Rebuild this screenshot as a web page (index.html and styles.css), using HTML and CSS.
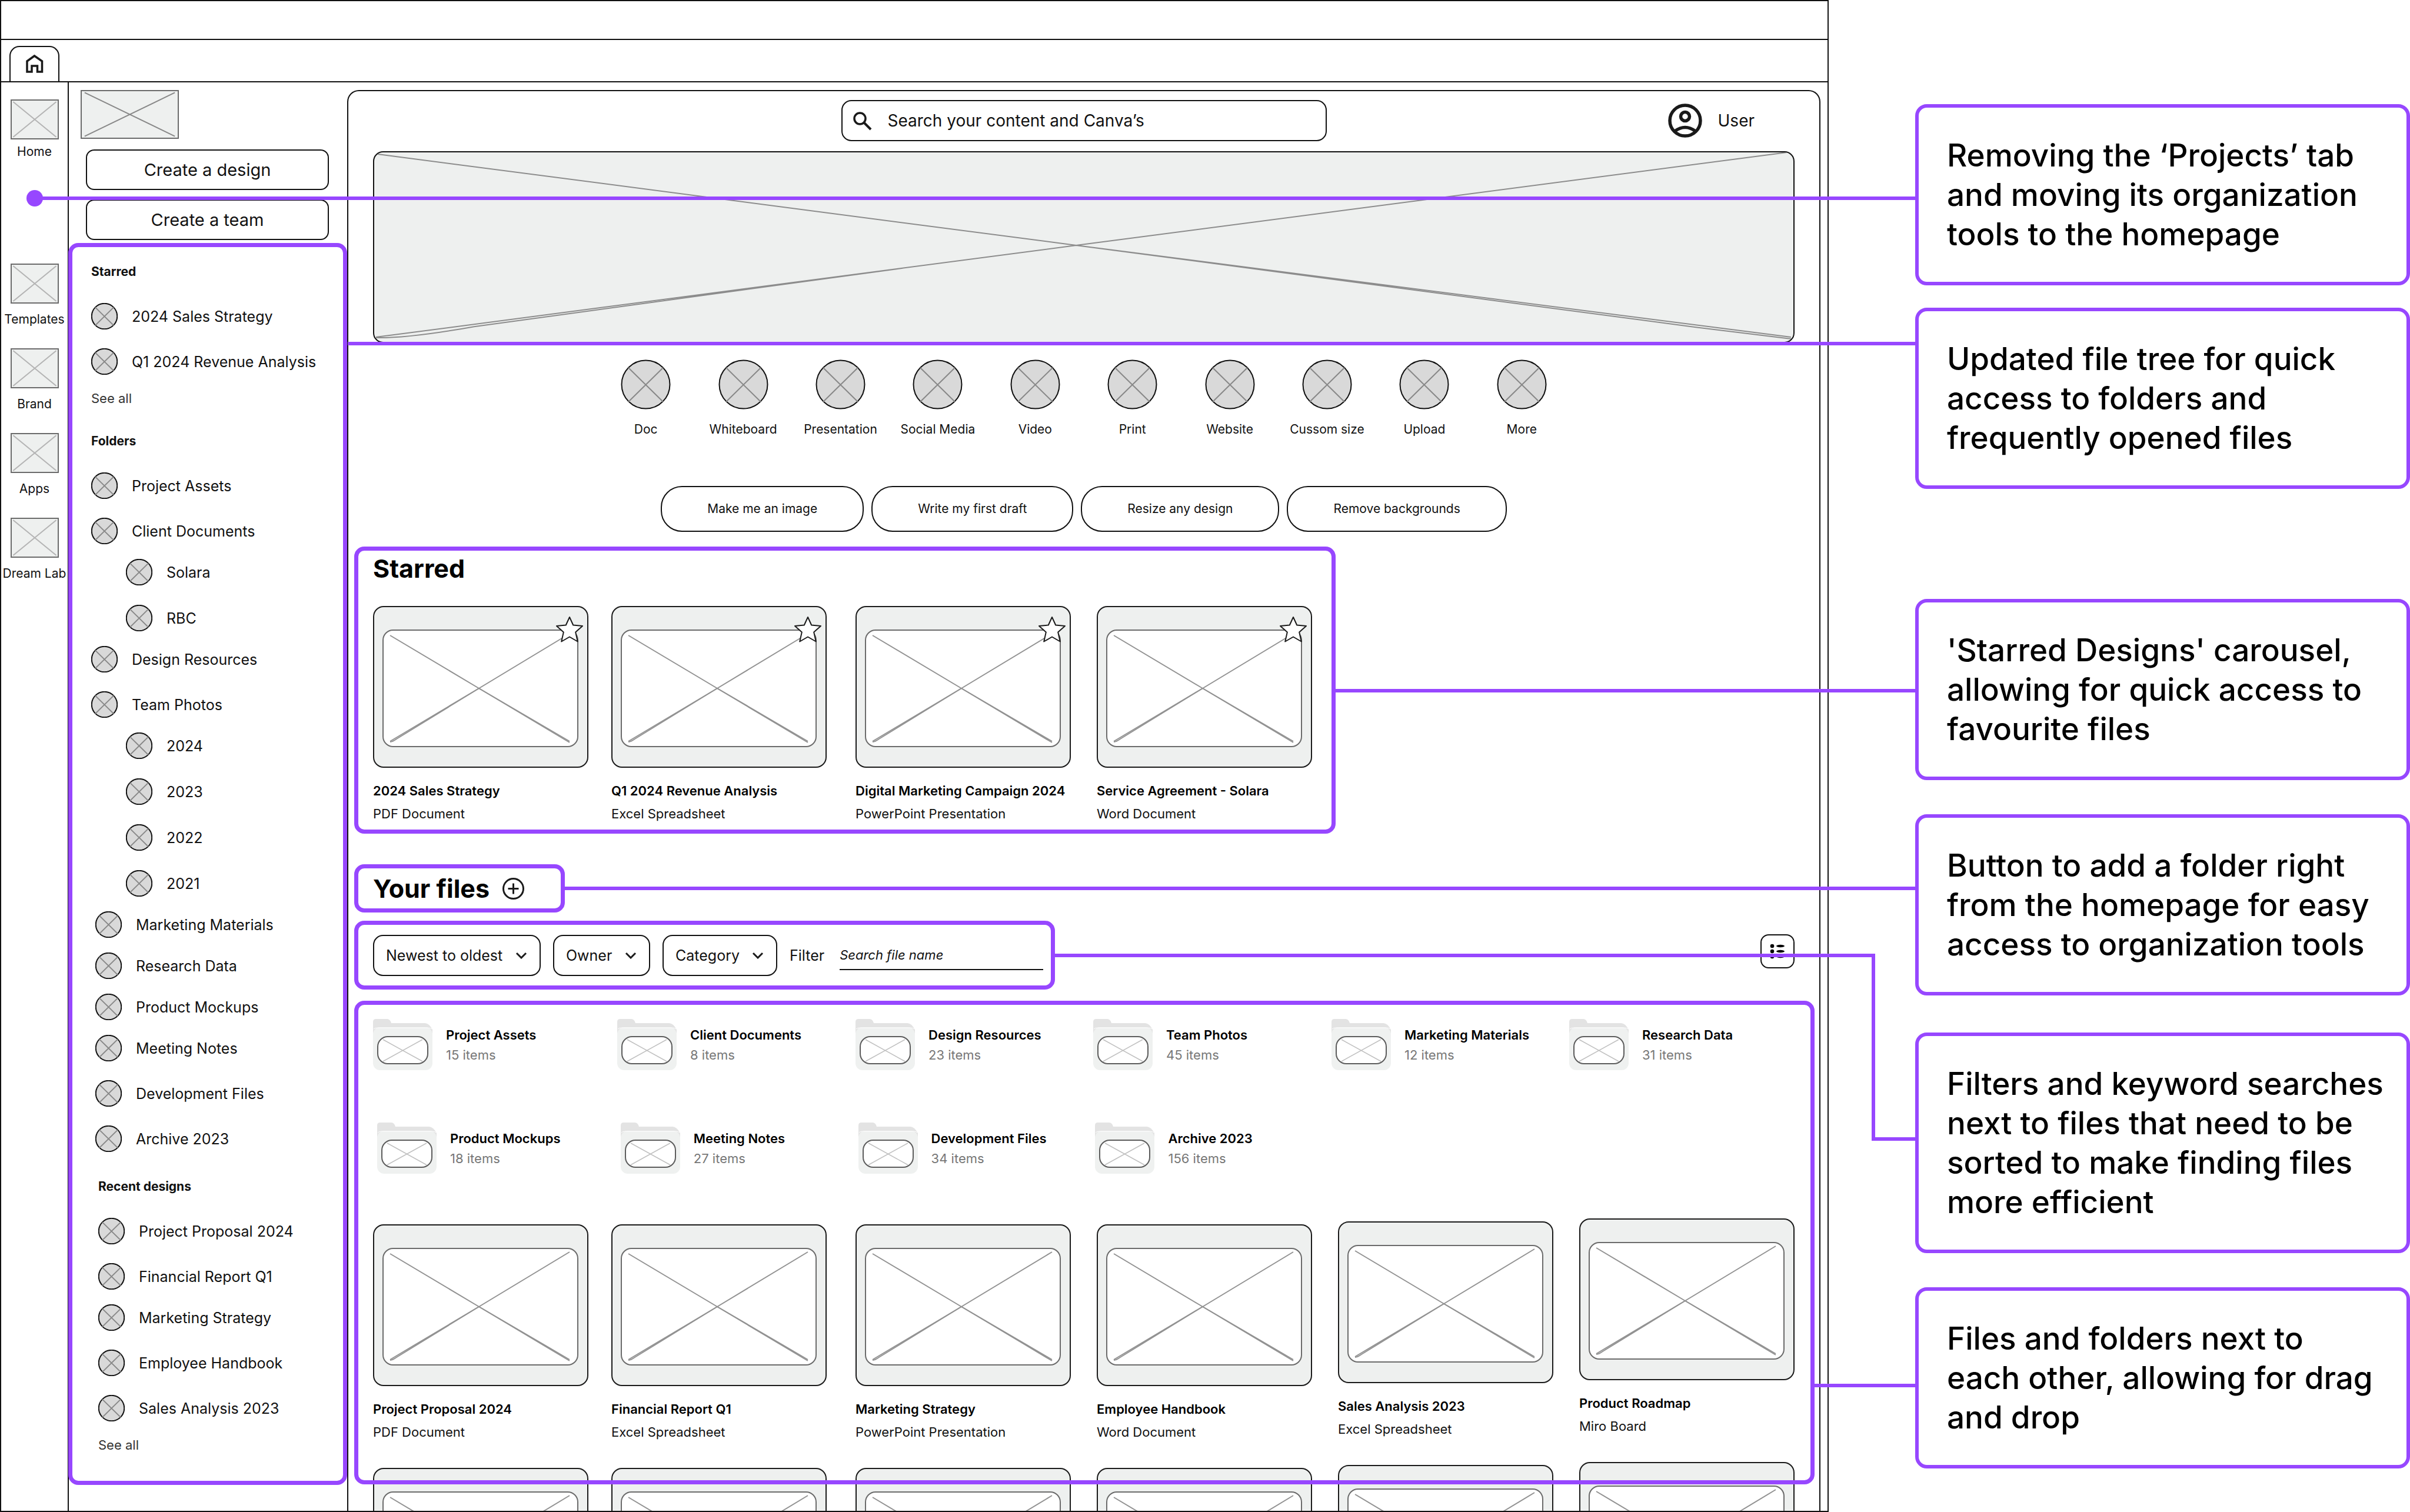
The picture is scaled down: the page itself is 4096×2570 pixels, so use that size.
FILE: index.html
```html
<!DOCTYPE html>
<html lang="en">
<head>
    <meta charset="UTF-8">
    <meta name="viewport" content="width=device-width, initial-scale=1.0">
    <title>Homepage wireframe</title>
    <link rel="stylesheet" href="styles.css">
</head>
<body>

<!-- Shared shapes -->
<svg class="shapes" aria-hidden="true">
    <symbol id="circle" viewBox="0 0 85 85">
        <circle class="disc" cx="42.5" cy="42.5" r="41"/>
        <path class="cross" d="M13 14L72 72M72 14L13 72"/>
    </symbol>
    <symbol id="box" viewBox="0 0 100 100" preserveAspectRatio="none">
        <path class="cross" d="M3 3L97 97M97 3L3 97"/>
    </symbol>
    <symbol id="thumb" viewBox="0 0 366 275">
        <rect x="1" y="1" width="364" height="273" rx="17" fill="#eef0ef" stroke="#1a1a1a" stroke-width="2"/>
        <rect x="17" y="41" width="331" height="198" rx="17" fill="#fff" stroke="#6b6b6b" stroke-width="2"/>
        <path d="M29 50L180 140L334 230M334 47L180 140L29 230" fill="none" stroke="#929292" stroke-width="2"/>
        <path d="M180 140L334 232M180 140L40 226Q33 231 29 231" fill="none" stroke="#929292" stroke-width="2"/>
    </symbol>
    <symbol id="star" viewBox="0 0 48 46">
        <path d="M24 2L30.2 15.5L46 17L34.2 27.6L37.8 43.5L24 35.5L10.2 43.5L13.8 27.6L2 17L17.8 15.5Z" fill="#fff" stroke="#1a1a1a" stroke-width="2" stroke-linejoin="round"/>
    </symbol>
    <symbol id="folder" viewBox="0 0 101 87">
        <path d="M0 20V5Q0 0 5 0H24Q29 0 31 7H88Q95 7 101 18V24H0Z" fill="#e3e3e3"/>
        <rect x="0" y="14" width="101" height="73" rx="12" fill="#eff1f0"/>
        <path d="M1 17Q3 15 8 15H93Q98 15 100 17" fill="none" stroke="#fff" stroke-width="1"/>
        <rect x="8" y="30" width="85" height="46" rx="17" fill="#fff" stroke="#5c5c5c" stroke-width="2"/>
        <path d="M17 35L84 72M84 35L17 72" stroke="#c0c0c0" stroke-width="1.5"/>
    </symbol>
    <symbol id="chevron" viewBox="0 0 20 12">
        <path d="M2 2L10 10L18 2" fill="none" stroke="#1a1a1a" stroke-width="3"/>
    </symbol>
</svg>

<main class="frame">
    <div class="titlebar"></div>
    <div class="tabbar">
        <a class="tab" href="#" aria-label="Home tab">
            <svg width="30" height="32" viewBox="0 0 30 32"><path d="M2 12L14.500 3L27.500 12V30H19.500V20H10V30H2Z" fill="none" stroke="#1a1a1a" stroke-width="3.500"/></svg>
        </a>
    </div>

    <div class="workspace">
        <nav class="rail">
            <a class="rail-item rail-home" href="#"><svg class="box"><use href="#box"/></svg>Home</a>
            <a class="rail-item" href="#"><svg class="box"><use href="#box"/></svg>Templates</a>
            <a class="rail-item" href="#"><svg class="box"><use href="#box"/></svg>Brand</a>
            <a class="rail-item" href="#"><svg class="box"><use href="#box"/></svg>Apps</a>
            <a class="rail-item" href="#"><svg class="box"><use href="#box"/></svg>Dream Lab</a>
        </nav>

        <aside class="sidebar">
            <div class="sidebar-top">
                <svg class="box logo"><use href="#box"/></svg>
                <button class="create">Create a design</button>
                <button class="create">Create a team</button>
            </div>

            <div class="tree outline">
                <section>
                    <h3>Starred</h3>
                    <ul>
                        <li><svg><use href="#circle"/></svg>2024 Sales Strategy</li>
                        <li class="apart"><svg><use href="#circle"/></svg>Q1 2024 Revenue Analysis</li>
                    </ul>
                    <a class="see-all" href="#">See all</a>
                </section>
                <section>
                    <h3>Folders</h3>
                    <ul>
                        <li><svg><use href="#circle"/></svg>Project Assets</li>
                        <li class="apart"><svg><use href="#circle"/></svg>Client Documents</li>
                    </ul>
                    <ul class="sub">
                        <li><svg><use href="#circle"/></svg>Solara</li>
                        <li><svg><use href="#circle"/></svg>RBC</li>
                    </ul>
                    <ul>
                        <li><svg><use href="#circle"/></svg>Design Resources</li>
                        <li class="apart"><svg><use href="#circle"/></svg>Team Photos</li>
                    </ul>
                    <ul class="sub">
                        <li><svg><use href="#circle"/></svg>2024</li>
                        <li><svg><use href="#circle"/></svg>2023</li>
                        <li><svg><use href="#circle"/></svg>2022</li>
                        <li><svg><use href="#circle"/></svg>2021</li>
                    </ul>
                    <ul class="shifted">
                        <li><svg><use href="#circle"/></svg>Marketing Materials</li>
                        <li><svg><use href="#circle"/></svg>Research Data</li>
                        <li><svg><use href="#circle"/></svg>Product Mockups</li>
                        <li><svg><use href="#circle"/></svg>Meeting Notes</li>
                        <li class="apart"><svg><use href="#circle"/></svg>Development Files</li>
                        <li class="apart"><svg><use href="#circle"/></svg>Archive 2023</li>
                    </ul>
                </section>
                <section class="recent">
                    <h3>Recent designs</h3>
                    <ul>
                        <li><svg><use href="#circle"/></svg>Project Proposal 2024</li>
                        <li class="apart"><svg><use href="#circle"/></svg>Financial Report Q1</li>
                        <li><svg><use href="#circle"/></svg>Marketing Strategy</li>
                        <li class="apart"><svg><use href="#circle"/></svg>Employee Handbook</li>
                        <li class="apart"><svg><use href="#circle"/></svg>Sales Analysis 2023</li>
                    </ul>
                    <a class="see-all" href="#">See all</a>
                </section>
            </div>
        </aside>

        <div class="content">
            <header class="topbar">
                <label class="search">
                    <svg width="33" height="33" viewBox="0 0 33 33"><path d="M20 20L31 31" stroke="#1a1a1a" stroke-width="4"/><circle cx="12.500" cy="12.500" r="9.500" fill="none" stroke="#1a1a1a" stroke-width="3.500"/></svg>
                    <input type="text" aria-label="Search" placeholder="Search your content and Canva’s">
                </label>
                <a class="user" href="#">
                    <svg width="58" height="58" viewBox="0 0 58 58" fill="none" stroke="#1a1a1a" stroke-width="5.500">
                        <circle cx="29" cy="29" r="26"/>
                        <circle cx="29" cy="22" r="7.500"/>
                        <path d="M11.500 47Q29 34 46.500 47"/>
                    </svg>
                    User
                </a>
            </header>

            <!-- Banner placeholder -->
            <svg class="banner" viewBox="0 0 2416 324" preserveAspectRatio="none">
                <path d="M6 3L1195 159L2412 316M1195 159L2250 299Q2350 311 2412 319M2405 0L1195 159L3 316M900 198L170 298Q60 318 3 317"/>
            </svg>

            <div class="shortcuts">
                <a href="#"><svg><use href="#circle"/></svg>Doc</a>
                <a href="#"><svg><use href="#circle"/></svg>Whiteboard</a>
                <a href="#"><svg><use href="#circle"/></svg>Presentation</a>
                <a href="#"><svg><use href="#circle"/></svg>Social Media</a>
                <a href="#"><svg><use href="#circle"/></svg>Video</a>
                <a href="#"><svg><use href="#circle"/></svg>Print</a>
                <a href="#"><svg><use href="#circle"/></svg>Website</a>
                <a href="#"><svg><use href="#circle"/></svg>Cussom size</a>
                <a href="#"><svg><use href="#circle"/></svg>Upload</a>
                <a href="#"><svg><use href="#circle"/></svg>More</a>
            </div>

            <div class="prompts">
                <button>Make me an image</button>
                <button>Write my first draft</button>
                <button>Resize any design</button>
                <button>Remove backgrounds</button>
            </div>

            <section class="starred outline">
                <h2>Starred</h2>
                <div class="starred-cards">
                    <article class="card">
                        <svg class="thumb"><use href="#thumb"/></svg>
                        <button class="star" aria-label="Unstar"><svg><use href="#star"/></svg></button>
                        <h4>2024 Sales Strategy</h4>
                        <p>PDF Document</p>
                    </article>
                    <article class="card">
                        <svg class="thumb"><use href="#thumb"/></svg>
                        <button class="star" aria-label="Unstar"><svg><use href="#star"/></svg></button>
                        <h4>Q1 2024 Revenue Analysis</h4>
                        <p>Excel Spreadsheet</p>
                    </article>
                    <article class="card">
                        <svg class="thumb"><use href="#thumb"/></svg>
                        <button class="star" aria-label="Unstar"><svg><use href="#star"/></svg></button>
                        <h4>Digital Marketing Campaign 2024</h4>
                        <p>PowerPoint Presentation</p>
                    </article>
                    <article class="card">
                        <svg class="thumb"><use href="#thumb"/></svg>
                        <button class="star" aria-label="Unstar"><svg><use href="#star"/></svg></button>
                        <h4>Service Agreement - Solara</h4>
                        <p>Word Document</p>
                    </article>
                </div>
            </section>

            <div class="your-files outline">
                <h2>Your files</h2>
                <button class="add" aria-label="Add folder">
                    <svg width="37" height="37" viewBox="0 0 37 37" fill="none" stroke="#1a1a1a" stroke-width="3"><circle cx="18.500" cy="18.500" r="17"/><path d="M18.500 9.500V27.500M9.500 18.500H27.500"/></svg>
                </button>
            </div>

            <div class="toolbar">
                <form class="filters outline">
                    <span class="select">
                        <select aria-label="Sort"><option>Newest to oldest</option></select>
                        <svg><use href="#chevron"/></svg>
                    </span>
                    <span class="select">
                        <select aria-label="Owner"><option>Owner</option></select>
                        <svg><use href="#chevron"/></svg>
                    </span>
                    <span class="select">
                        <select aria-label="Category"><option>Category</option></select>
                        <svg><use href="#chevron"/></svg>
                    </span>
                    <label for="filter">Filter</label>
                    <input type="text" id="filter" placeholder="Search file name">
                </form>
                <button class="view" aria-label="List view">
                    <svg width="26" height="26" viewBox="0 0 26 26">
                        <circle cx="4" cy="4" r="3.300"/><circle cx="4" cy="13" r="3.300"/><circle cx="4" cy="22" r="3.300"/>
                        <ellipse cx="18" cy="4" rx="7" ry="2.200"/><ellipse cx="18" cy="13" rx="7" ry="2.200"/><ellipse cx="18" cy="22" rx="7" ry="2.200"/>
                    </svg>
                </button>
            </div>

            <section class="files outline">
                <div class="folders">
                    <a href="#"><svg><use href="#folder"/></svg><span><b>Project Assets</b>15 items</span></a>
                    <a href="#"><svg><use href="#folder"/></svg><span><b>Client Documents</b>8 items</span></a>
                    <a href="#"><svg><use href="#folder"/></svg><span><b>Design Resources</b>23 items</span></a>
                    <a href="#"><svg><use href="#folder"/></svg><span><b>Team Photos</b>45 items</span></a>
                    <a href="#"><svg><use href="#folder"/></svg><span><b>Marketing Materials</b>12 items</span></a>
                    <a href="#"><svg><use href="#folder"/></svg><span><b>Research Data</b>31 items</span></a>
                </div>
                <div class="folders folders-second">
                    <a href="#"><svg><use href="#folder"/></svg><span><b>Product Mockups</b>18 items</span></a>
                    <a href="#"><svg><use href="#folder"/></svg><span><b>Meeting Notes</b>27 items</span></a>
                    <a href="#"><svg><use href="#folder"/></svg><span><b>Development Files</b>34 items</span></a>
                    <a href="#"><svg><use href="#folder"/></svg><span><b>Archive 2023</b>156 items</span></a>
                </div>
                <div class="file-cards">
                    <article class="card">
                        <svg class="thumb"><use href="#thumb"/></svg>
                        <h4>Project Proposal 2024</h4>
                        <p>PDF Document</p>
                    </article>
                    <article class="card">
                        <svg class="thumb"><use href="#thumb"/></svg>
                        <h4>Financial Report Q1</h4>
                        <p>Excel Spreadsheet</p>
                    </article>
                    <article class="card">
                        <svg class="thumb"><use href="#thumb"/></svg>
                        <h4>Marketing Strategy</h4>
                        <p>PowerPoint Presentation</p>
                    </article>
                    <article class="card">
                        <svg class="thumb"><use href="#thumb"/></svg>
                        <h4>Employee Handbook</h4>
                        <p>Word Document</p>
                    </article>
                    <article class="card">
                        <svg class="thumb"><use href="#thumb"/></svg>
                        <h4>Sales Analysis 2023</h4>
                        <p>Excel Spreadsheet</p>
                    </article>
                    <article class="card">
                        <svg class="thumb"><use href="#thumb"/></svg>
                        <h4>Product Roadmap</h4>
                        <p>Miro Board</p>
                    </article>
                </div>
            </section>

            <!-- Next row, cut off by the bottom of the frame -->
            <div class="file-cards next-row">
                <article class="card"><svg class="thumb"><use href="#thumb"/></svg></article>
                <article class="card"><svg class="thumb"><use href="#thumb"/></svg></article>
                <article class="card"><svg class="thumb"><use href="#thumb"/></svg></article>
                <article class="card"><svg class="thumb"><use href="#thumb"/></svg></article>
                <article class="card"><svg class="thumb"><use href="#thumb"/></svg></article>
                <article class="card"><svg class="thumb"><use href="#thumb"/></svg></article>
            </div>
        </div>
    </div>
</main>

<!-- Notes, each with a line back to the part it describes -->
<div class="notes">
    <p class="note note-projects">Removing the ‘Projects’ tab<br>and moving its organization<br>tools to the homepage</p>
    <p class="note note-tree">Updated file tree for quick<br>access to folders and<br>frequently opened files</p>
    <p class="note note-starred">'Starred Designs' carousel,<br>allowing for quick access to<br>favourite files</p>
    <p class="note note-add">Button to add a folder right<br>from the homepage for easy<br>access to organization tools</p>
    <p class="note note-filters">Filters and keyword searches<br>next to files that need to be<br>sorted to make finding files<br>more efficient</p>
    <p class="note note-files">Files and folders next to<br>each other, allowing for drag<br>and drop</p>
</div>

</body>
</html>
```

FILE: styles.css
```css
*, *::before, *::after {
    margin: 0;
    padding: 0;
    box-sizing: border-box;
}
body {
    display: grid;
    grid-template-columns: 1fr 841px;
    column-gap: 147px;
    height: 100vh;
    overflow: hidden;
    background: #fff;
    color: #111;
    font-family: 'Inter', sans-serif;
    font-size: 22px;
    line-height: 28px;
}
a {
    color: inherit;
    text-decoration: none;
}
ul {
    list-style: none;
}
button, input, select {
    font: inherit;
    color: inherit;
    background: transparent;
    border: 0;
    outline: 0;
}
input::placeholder {
    color: inherit;
    opacity: 1;
}
svg {
    display: block;
    flex: none;
}
.shapes {
    position: absolute;
    width: 0;
    height: 0;
}
.disc {
    fill: #d9d9d9;
    stroke: #111;
    stroke-width: 2px;
    vector-effect: non-scaling-stroke;
}
.cross {
    fill: none;
    stroke: var(--cross, #888);
    stroke-width: 2px;
    vector-effect: non-scaling-stroke;
}
.outline {
    border: 7px solid #9747ff;
    border-radius: 17px;
}

/* Window frame */
.frame {
    display: flex;
    flex-direction: column;
    height: 100vh;
    border: 2px solid #111;
    overflow: hidden;
}
.titlebar {
    flex: none;
    height: 66px;
    border-bottom: 2px solid #111;
}
.tabbar {
    flex: none;
    display: flex;
    align-items: flex-end;
    height: 72px;
    padding-left: 14px;
    border-bottom: 2px solid #111;
}
.tab {
    display: flex;
    justify-content: center;
    width: 85px;
    height: 60px;
    padding-top: 12px;
    border: 2px solid #111;
    border-bottom: 0;
    border-radius: 17px 17px 0 0;
}
.workspace {
    flex: 1;
    display: flex;
    min-height: 0;
}

/* Icon rail */
.rail {
    --cross: #b4b4b4;
    flex: none;
    display: flex;
    flex-direction: column;
    gap: 36px;
    width: 115px;
    padding-top: 29px;
    border-right: 2px solid #111;
}
.rail-item {
    display: flex;
    flex-direction: column;
    align-items: center;
    gap: 14px;
    font-size: 21px;
    line-height: 26px;
    white-space: nowrap;
}
.rail-home {
    gap: 8px;
    margin-bottom: 141px;
}
.box {
    width: 82px;
    height: 68px;
    background: #eef0ef;
    border: 2px solid #6b6b6b;
}

/* Sidebar */
.sidebar {
    flex: none;
    width: 473px;
}
.sidebar-top {
    display: flex;
    flex-direction: column;
    gap: 16px;
    padding: 13px 31px 5px 29px;
}
.logo {
    width: 167px;
    height: 83px;
    margin: 0 0 2px -9px;
}
.create {
    height: 69px;
    border: 2px solid #111;
    border-radius: 14px;
    font-size: 29px;
}
.tree {
    position: relative;
    margin-left: -1px;
    padding: 28px 0 47px 32px;
}
.tree section + section {
    margin-top: 45px;
}
.tree h3 {
    margin-bottom: 39px;
    font-size: 21px;
    font-weight: 700;
}
.tree li {
    display: flex;
    align-items: center;
    gap: 24px;
    height: 45px;
    font-size: 25px;
}
.tree li svg {
    width: 45px;
    height: 45px;
}
.tree li + li,
.tree ul + ul {
    margin-top: 25px;
}
.tree li.apart {
    margin-top: 32px;
}
.tree .sub {
    padding-left: 59px;
}
.tree .sub li + li {
    margin-top: 33px;
}
.tree .shifted {
    padding-left: 7px;
}
.tree .recent {
    padding-left: 12px;
}
.see-all {
    display: block;
    margin-top: 26px;
    font-size: 22px;
    color: #333;
}

/* Content */
.content {
    flex: 1;
    min-width: 0;
    margin: 13px 12px 0 0;
    padding-top: 15px;
    border: 2px solid #111;
    border-bottom: 0;
    border-radius: 20px 20px 0 0;
}
.topbar {
    display: grid;
    grid-template-columns: 1fr 825px 1fr;
    align-items: center;
}
.search {
    grid-column: 2;
    display: flex;
    align-items: center;
    gap: 27px;
    height: 70px;
    padding: 0 17px;
    border: 2px solid #111;
    border-radius: 17px;
}
.search input {
    flex: 1;
    font-size: 28px;
}
.user {
    justify-self: end;
    display: flex;
    align-items: center;
    gap: 27px;
    padding-right: 110px;
    font-size: 28px;
}
.banner {
    width: calc(100% - 84px);
    height: 326px;
    margin: 17px 42px 0;
    background: #eef0ef;
    border: 2px solid #111;
    border-radius: 17px;
}
.banner path {
    fill: none;
    stroke: #8c8c8c;
    stroke-width: 2px;
}
.shortcuts {
    display: grid;
    grid-template-columns: repeat(10, 1fr);
    width: 1654px;
    margin: 28px auto 82px;
}
.shortcuts a {
    display: flex;
    flex-direction: column;
    align-items: center;
    gap: 20px;
    font-size: 21px;
}
.shortcuts svg {
    width: 85px;
    height: 85px;
}
.prompts {
    display: flex;
    justify-content: center;
    gap: 13px;
    margin-bottom: 25px;
}
.prompts button {
    height: 78px;
    padding: 0 77px;
    border: 2px solid #111;
    border-radius: 36px;
    font-size: 21px;
}
h2 {
    font-size: 43px;
    line-height: 52px;
    font-weight: 700;
    color: #000;
}

/* Starred carousel */
.starred {
    width: 1668px;
    margin: 0 0 52px 10px;
    padding: 4px 33px 13px 25px;
}
.starred-cards {
    display: grid;
    grid-template-columns: 405fr 415fr 410fr 366fr;
    margin-top: 38px;
}
.card {
    position: relative;
    width: 366px;
    white-space: nowrap;
}
.thumb {
    width: 366px;
    height: 275px;
    margin-bottom: 25px;
}
.card h4 {
    margin-bottom: 11px;
    font-size: 22px;
    font-weight: 600;
    color: #000;
}
.star {
    position: absolute;
    top: 17px;
    right: 8px;
}
.star svg {
    width: 48px;
    height: 46px;
}

/* Files */
.your-files {
    display: flex;
    align-items: center;
    gap: 22px;
    width: fit-content;
    height: 82px;
    margin: 0 0 14px 10px;
    padding: 0 62px 0 25px;
}
.toolbar {
    display: flex;
    justify-content: space-between;
    margin: 0 42px 19px 10px;
}
.filters {
    display: flex;
    align-items: center;
    gap: 21px;
    height: 117px;
    padding: 0 13px 0 25px;
    font-size: 25px;
}
.select {
    position: relative;
}
.select select {
    appearance: none;
    height: 70px;
    padding: 0 62px 0 20px;
    border: 2px solid #111;
    border-radius: 17px;
}
.select svg {
    position: absolute;
    top: 29px;
    right: 23px;
    width: 20px;
    height: 12px;
    pointer-events: none;
}
.filters input {
    width: 346px;
    height: 50px;
    margin-left: 5px;
    border-bottom: 2px solid #111;
    font-size: 22px;
    font-style: italic;
}
.view {
    display: flex;
    align-items: center;
    justify-content: center;
    width: 58px;
    height: 58px;
    margin-top: 23px;
    border: 2px solid #111;
    border-radius: 14px;
}
.files {
    position: relative;
    z-index: 1;
    margin: 0 8px 0 10px;
    padding: 24px 27px 68px 25px;
}
.folders {
    display: grid;
    grid-template-columns: 415fr 405fr 404fr 405fr 404fr 383fr;
}
.folders a {
    display: flex;
    align-items: center;
    gap: 23px;
    white-space: nowrap;
    color: #777;
}
.folders svg {
    width: 101px;
    height: 87px;
}
.folders b {
    display: block;
    margin-bottom: 6px;
    font-weight: 600;
    color: #000;
}
.folders-second {
    margin: 89px 0 86px;
    padding-left: 7px;
}
.file-cards {
    display: grid;
    grid-template-columns: 405fr 415fr 410fr 410fr 410fr 366fr;
}
/* the last two columns step up */
.file-cards .card:nth-child(5) {
    margin-top: -5px;
}
.file-cards .card:nth-child(6) {
    margin-top: -10px;
}
.next-row {
    margin: -28px 42px 0;
}

/* Notes */
.notes {
    position: relative;
    z-index: 2;
    padding-top: 177px;
}
.note {
    position: relative;
    padding: 48px 0 47px 48px;
    border: 6px solid #9747ff;
    border-radius: 20px;
    color: #000;
    font-size: 53px;
    font-weight: 500;
    line-height: 67px;
    white-space: nowrap;
}
.note::before {
    content: '';
    position: absolute;
    right: 100%;
    height: 6px;
    background: #9747ff;
}
.note-projects::before {
    top: 151px;
    width: 3202px;
}
.note-projects::after {
    content: '';
    position: absolute;
    top: 140px;
    right: calc(100% + 3188px);
    width: 28px;
    height: 28px;
    border-radius: 50%;
    background: #9747ff;
}
.note-tree {
    margin-top: 38px;
}
.note-tree::before {
    top: 52px;
    width: 2670px;
}
.note-starred {
    margin-top: 187px;
}
.note-starred::before {
    top: 147px;
    width: 991px;
}
.note-add {
    margin-top: 58px;
}
.note-add::before {
    top: 117px;
    width: 2301px;
}
.note-filters {
    margin-top: 63px;
}
.note-filters::before {
    top: 172px;
    width: 80px;
}
.note-filters::after {
    content: '';
    position: absolute;
    top: -140px;
    right: calc(100% + 74px);
    width: 1397px;
    height: 318px;
    border: solid #9747ff;
    border-width: 6px 6px 0 0;
}
.note-files {
    margin-top: 58px;
}
.note-files::before {
    top: 158px;
    width: 177px;
}
```
